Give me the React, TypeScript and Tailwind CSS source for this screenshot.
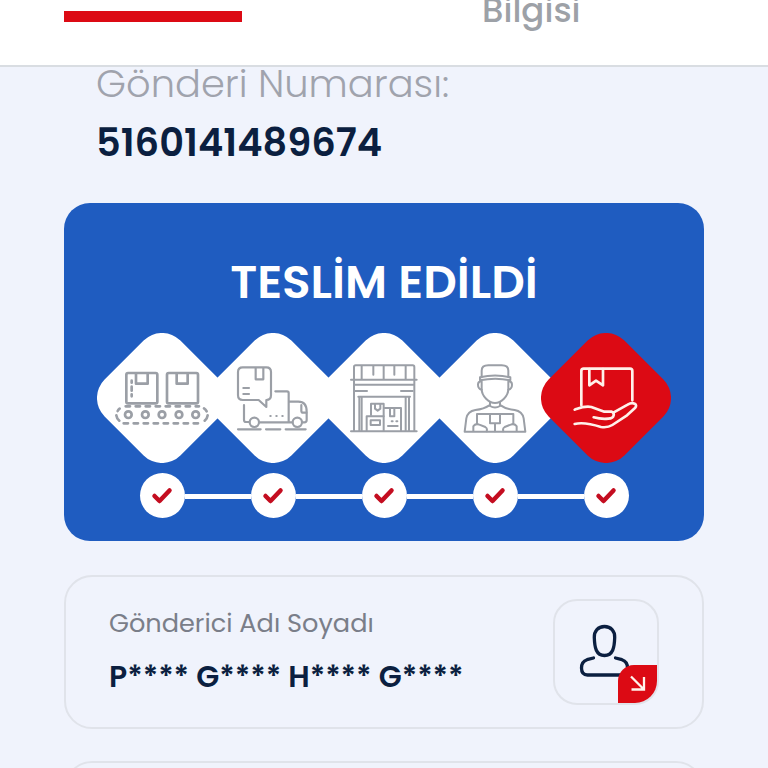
import type { ReactNode } from 'react'

interface Step {
  id: string
  icon: ReactNode
  viewBox: string
  active?: boolean
}

const conveyorIcon = (
  <g strokeWidth="8">
    <rect x="109" y="144" width="93" height="91" rx="5" />
    <path d="M138 146v30h35v-30M125 167v6M125 185v12M125 208v6" />
    <rect x="231" y="144" width="93" height="91" rx="5" />
    <path d="M260 146v30h33v-30" />
    <path d="M107 244h220M101 295h230" strokeDasharray="13 17" />
    <path d="M89 251q-4 3 -6 7M79 271q1 9 9 16M342 250q5 3 8 9M353 271q-1 9 -9 16" />
    <circle cx="115" cy="269" r="10" />
    <circle cx="166" cy="269" r="10" />
    <circle cx="216" cy="269" r="10" />
    <circle cx="267" cy="269" r="10" />
    <circle cx="317" cy="269" r="10" />
  </g>
)

const truckIcon = (
  <g strokeWidth="6.5">
    <path d="M113 127h71q14 0 14 14v70q0 14 -14 14v21l-23 -21h-48q-14 0 -14 -14v-70q0 -14 14 -14z" />
    <path d="M152 129v34h23v-34M115 189h17M115 207h17" />
    <path d="M117 240v45q0 6 6 6h10M163 292h99M211 199h35q5 0 5 5v88M252 230h28q25 0 25 30v25q0 7 -7 7h-5" />
    <path d="M289 240v17q0 6 5 6h10" />
    <circle cx="148" cy="292" r="14" />
    <circle cx="277" cy="292" r="14" />
    <path d="M196 273h1M214 273h1M232 273h1" />
    <path d="M99 313h68M183 313h43M242 313h60" />
  </g>
)

const warehouseIcon = (
  <g strokeWidth="6">
    <path d="M102 163v-37q0 -5 5 -5h171q5 0 5 5v37M93 164h197M125 122v41M191 122v41M257 122v41M160 124v25M223 124v25" />
    <path d="M102 166v152M118 217v101M283 166v152M267 217v101M93 319h197" />
    <path d="M104 179h177M106 198h35M243 198h35M115 215h155M125 218v99M257 218v99" />
    <path d="M153 270v-34h38v82M165 238v13l8 6l8 -6v-13" />
    <path d="M140 317v-43h51M152 286h28v14h-28z" />
    <path d="M194 249h49v68M210 251v23h13v-23M204 303h29M215 289h3M229 289h3" />
  </g>
)

const courierIcon = (
  <g strokeWidth="6">
    <path d="M155 157v-20q0 -16 20 -16h40q20 0 20 16v20" />
    <path d="M150 157q45 -11 91 0v9q-45 -10 -91 0z" />
    <path d="M155 169v23c0 22 22 42 40 42s40 -20 40 -42v-23" />
    <path d="M153 169q-9 1 -9 10q0 12 11 15M237 169q9 1 9 10q0 12 -11 15" />
    <path d="M180 231v12q15 9 30 0v-12" />
    <path d="M178 241q-16 11 -42 14q-23 4 -27 25l-5 40h182l-5 -40q-4 -21 -27 -25q-27 -3 -42 -14" />
    <path d="M141 296v-29h109v29M180 268v27h30v-27M195 297v22" />
    <path d="M130 318v-14q6 -10 18 -5l18 7q7 4 4 13M260 318v-14q-6 -10 -18 -5l-18 7q-7 4 -4 13" />
  </g>
)

const handoverIcon = (
  <g strokeWidth="8">
    <path d="M139 241v-103q0 -7 7 -7h139q7 0 7 7v88" />
    <path d="M163 132v49l20 -14l21 14v-49" />
    <path d="M119 254c17 -6 30 -12 50 -8l39 14h22q8 4 6 11q-2 10 -16 10q-22 2 -44 -4" />
    <path d="M235 263l43 -24q11 -7 21 -3q8 5 1 13l-24 22l-44 29q-14 9 -34 6c-31 -10 -56 -15 -79 -9" />
  </g>
)

const steps: Step[] = [
  { id: 'accepted', icon: conveyorIcon, viewBox: '21 24 390 390' },
  { id: 'transfer', icon: truckIcon, viewBox: '9 24 390 390' },
  { id: 'branch', icon: warehouseIcon, viewBox: '-3 24 390 390' },
  { id: 'courier', icon: courierIcon, viewBox: '0 24 390 390' },
  { id: 'delivered', icon: handoverIcon, viewBox: '18 24 390 390', active: true },
]

// Diamonds are wider than their column, so neighbours overlap
function StepDiamond({ step }: { step: Step }) {
  return (
    <div className="-mx-[9.5px] grid h-[130px] w-[130px]">
      <svg
        viewBox="0 0 130 130"
        className={`col-start-1 row-start-1 size-[130px] fill-current ${step.active ? 'text-[#dc0a14]' : 'text-white'}`}
      >
        <rect x="11.4" y="11.4" width="107.2" height="107.2" rx="26" transform="rotate(45 65 65)" />
      </svg>
      <svg
        viewBox={step.viewBox}
        className={`col-start-1 row-start-1 size-[130px] ${step.active ? 'text-[#fff1ea]' : 'text-[#9b9fa6]'}`}
        fill="none"
        stroke="currentColor"
        strokeLinecap="round"
        strokeLinejoin="round"
      >
        {step.icon}
      </svg>
    </div>
  )
}

function StepCheck() {
  return (
    <div className="flex size-[45px] items-center justify-center rounded-full bg-white">
      <svg
        viewBox="0 0 45 45"
        className="size-[45px]"
        fill="none"
        stroke="#c40d20"
        strokeWidth="4.5"
        strokeLinecap="round"
        strokeLinejoin="round"
      >
        <path d="M14.5 23l5 5l10 -10.5" />
      </svg>
    </div>
  )
}

function SenderBadge() {
  return (
    <div className="relative size-[106px] rounded-[24px] border-2 border-[#e0e3ea]">
      <svg
        viewBox="0 0 102 102"
        className="size-[102px]"
        fill="none"
        stroke="#0b1f40"
        strokeWidth="3.3"
        strokeLinecap="round"
      >
        <path d="M49.5 25.5c-6.5 0 -10.4 4.5 -10.2 11c.3 10 1.7 18 10.2 18s9.900 -8 10.200 -18c.2 -6.5 -3.700 -11 -10.200 -11z" />
        <path d="M38.5 57l-6.5 1.7q-5.500 1.800 -5.500 8.300q0 7 6 7h34q6 0 6 -7q0 -6.500 -5.500 -8.300l-6.500 -1.700" />
      </svg>
      <div className="absolute right-0 bottom-0 h-[38px] w-[39px] rounded-tl-[16px] rounded-br-[22px] bg-[#dc0a14]">
        <svg viewBox="0 0 39 38" className="h-[38px] w-[39px]" fill="none" stroke="#fff4ec" strokeWidth="2.3">
          <path d="M13 11.5l12.5 12.5M26 12v12.5h-12.5" />
        </svg>
      </div>
    </div>
  )
}

export default function App() {
  return (
    <div className="flex h-screen flex-col overflow-hidden bg-[#f0f3fc] font-['Poppins','Inter',sans-serif] whitespace-nowrap">
      <header className="flex h-[67px] shrink-0 items-start border-b-2 border-[#d9dde2] bg-white px-16">
        <div className="mt-[11px] h-[11px] w-[178px] bg-[#dc0a14]" />
        <div className="-mt-[11px] ml-[240px] text-[34px] leading-[42px] font-medium text-[#9da1a7]">
          Bilgisi
        </div>
      </header>

      <main className="flex flex-col px-16">
        <div className="h-[136px] pl-8">
          <p className="-mt-[4px] text-[38.4px] leading-[42px] font-light text-[#a0a3ad]">
            Gönderi Numarası:
          </p>
          <p className="mt-[15px] text-[38.4px] leading-[46px] font-semibold text-[#0b1f40]">
            5160141489674
          </p>
        </div>

        <section className="h-[338px] shrink-0 rounded-[26px] bg-[#1f5cc0] pt-[52px]">
          <h1 className="h-[78px] text-center text-[46.8px] leading-[54px] font-semibold text-white">
            TESLİM EDİLDİ
          </h1>
          <div className="flex justify-center">
            {steps.map((step) => (
              <StepDiamond key={step.id} step={step} />
            ))}
          </div>
          <div className="mx-auto mt-[10px] flex w-[489px] items-center">
            {steps.map((step, i) => (
              <div key={step.id} className="flex items-center">
                {i > 0 && <div className="mt-px h-[5px] w-[66px] bg-white" />}
                <StepCheck />
              </div>
            ))}
          </div>
        </section>

        <section className="mt-[34px] flex h-[154px] shrink-0 items-center justify-between rounded-[28px] border-2 border-[#e0e3ea] px-[43px]">
          <div className="-mt-[3px]">
            <p className="text-[25.6px] leading-[32px] font-normal text-[#7a7e89]">Gönderici Adı Soyadı</p>
            <p className="mt-[21px] text-[29.9px] leading-[34px] font-semibold text-[#0b1f40]">
              P**** G**** H**** G****
            </p>
          </div>
          <SenderBadge />
        </section>

        <section className="mt-8 h-[154px] shrink-0 rounded-[28px] border-2 border-[#e0e3ea]" />
      </main>
    </div>
  )
}
